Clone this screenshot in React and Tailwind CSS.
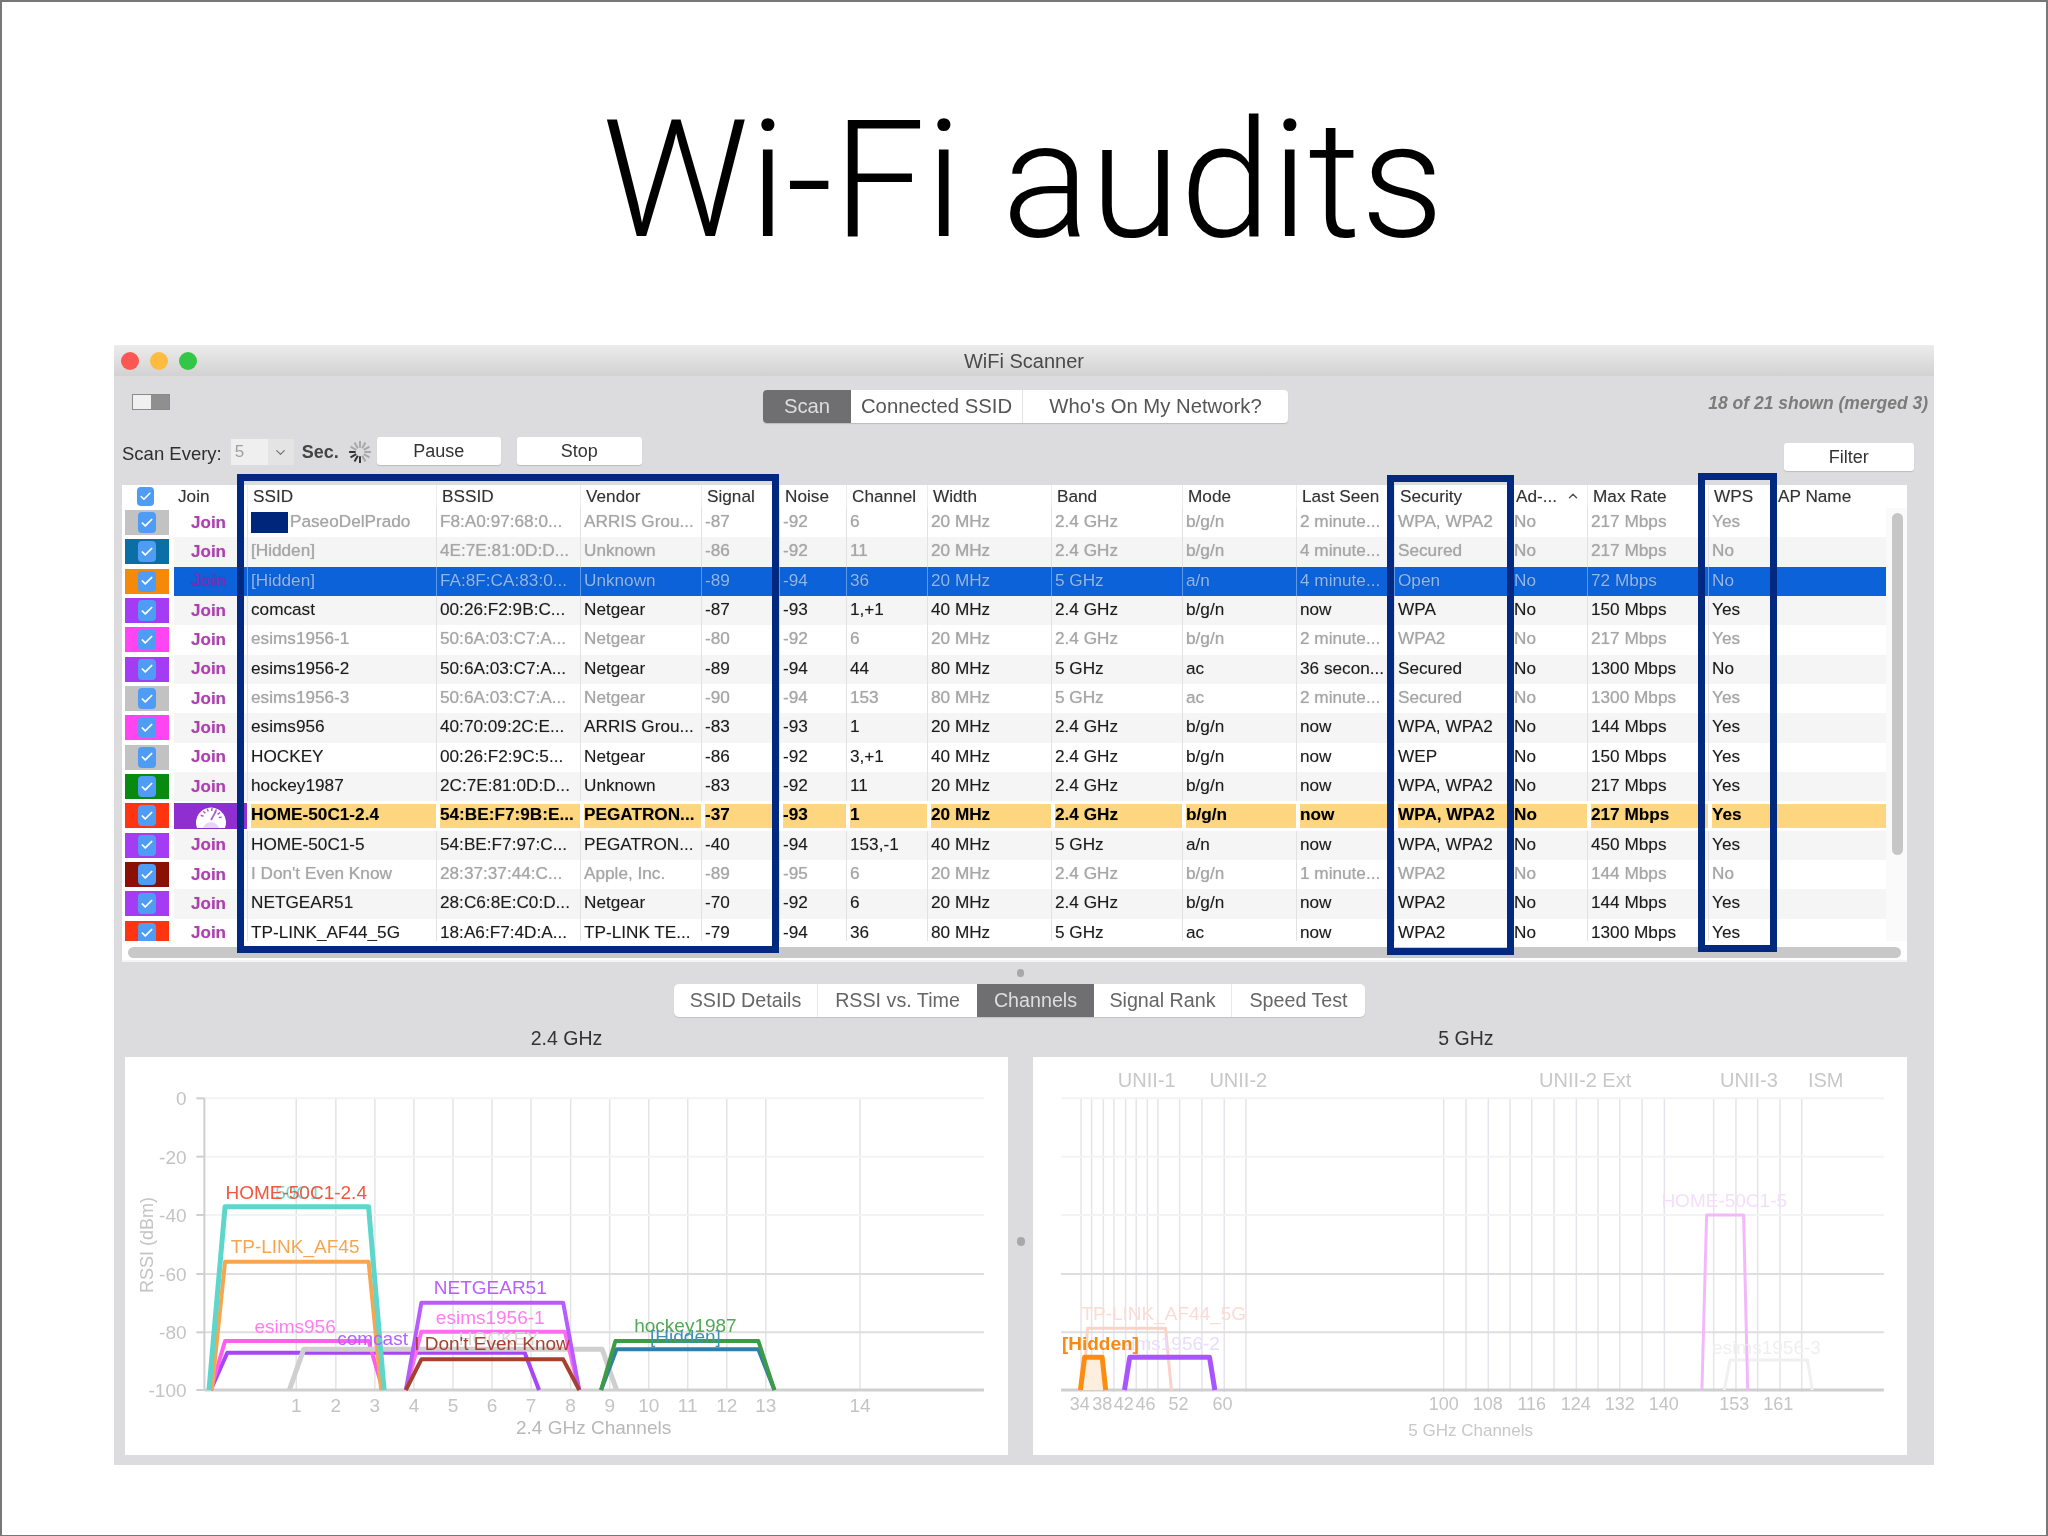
import React from "react";
import { Check, ChevronDown, ChevronUp } from "lucide-react";

const COLS = "grid grid-cols-[52px_73px_189px_144px_121px_78px_67px_81px_124px_131px_114px_98px_116px_77px_121px_64px_114px]";

const HEAD = ["SSID","BSSID","Vendor","Signal","Noise","Channel","Width","Band","Mode","Last Seen","Security","Ad-...","Max Rate","WPS","AP Name"];

const ROWS = [
  { c:"bg-[#c2c2c2]", dim:1, v:["PaseoDelPrado","F8:A0:97:68:0...","ARRIS Grou...","-87","-92","6","20 MHz","2.4 GHz","b/g/n","2 minute...","WPA, WPA2","No","217 Mbps","Yes",""] },
  { c:"bg-[#0b6fa6]", dim:1, v:["[Hidden]","4E:7E:81:0D:D...","Unknown","-86","-92","11","20 MHz","2.4 GHz","b/g/n","4 minute...","Secured","No","217 Mbps","No",""] },
  { c:"bg-[#f58a0a]", sel:1, v:["[Hidden]","FA:8F:CA:83:0...","Unknown","-89","-94","36","20 MHz","5 GHz","a/n","4 minute...","Open","No","72 Mbps","No",""] },
  { c:"bg-[#a33cf2]", v:["comcast","00:26:F2:9B:C...","Netgear","-87","-93","1,+1","40 MHz","2.4 GHz","b/g/n","now","WPA","No","150 Mbps","Yes",""] },
  { c:"bg-[#ff45f2]", dim:1, v:["esims1956-1","50:6A:03:C7:A...","Netgear","-80","-92","6","20 MHz","2.4 GHz","b/g/n","2 minute...","WPA2","No","217 Mbps","Yes",""] },
  { c:"bg-[#a33cf2]", v:["esims1956-2","50:6A:03:C7:A...","Netgear","-89","-94","44","80 MHz","5 GHz","ac","36 secon...","Secured","No","1300 Mbps","No",""] },
  { c:"bg-[#c2c2c2]", dim:1, v:["esims1956-3","50:6A:03:C7:A...","Netgear","-90","-94","153","80 MHz","5 GHz","ac","2 minute...","Secured","No","1300 Mbps","Yes",""] },
  { c:"bg-[#ff45f2]", v:["esims956","40:70:09:2C:E...","ARRIS Grou...","-83","-93","1","20 MHz","2.4 GHz","b/g/n","now","WPA, WPA2","No","144 Mbps","Yes",""] },
  { c:"bg-[#c2c2c2]", v:["HOCKEY","00:26:F2:9C:5...","Netgear","-86","-92","3,+1","40 MHz","2.4 GHz","b/g/n","now","WEP","No","150 Mbps","Yes",""] },
  { c:"bg-[#08890f]", v:["hockey1987","2C:7E:81:0D:D...","Unknown","-83","-92","11","20 MHz","2.4 GHz","b/g/n","now","WPA, WPA2","No","217 Mbps","Yes",""] },
  { c:"bg-[#ff3410]", hi:1, v:["HOME-50C1-2.4","54:BE:F7:9B:E...","PEGATRON...","-37","-93","1","20 MHz","2.4 GHz","b/g/n","now","WPA, WPA2","No","217 Mbps","Yes",""] },
  { c:"bg-[#a33cf2]", v:["HOME-50C1-5","54:BE:F7:97:C...","PEGATRON...","-40","-94","153,-1","40 MHz","5 GHz","a/n","now","WPA, WPA2","No","450 Mbps","Yes",""] },
  { c:"bg-[#8a1006]", dim:1, v:["I Don't Even Know","28:37:37:44:C...","Apple, Inc.","-89","-95","6","20 MHz","2.4 GHz","b/g/n","1 minute...","WPA2","No","144 Mbps","No",""] },
  { c:"bg-[#a33cf2]", v:["NETGEAR51","28:C6:8E:C0:D...","Netgear","-70","-92","6","20 MHz","2.4 GHz","b/g/n","now","WPA2","No","144 Mbps","Yes",""] },
  { c:"bg-[#ff3410]", v:["TP-LINK_AF44_5G","18:A6:F7:4D:A...","TP-LINK TE...","-79","-94","36","80 MHz","5 GHz","ac","now","WPA2","No","1300 Mbps","Yes",""] },
];

function Box() {
  return (
    <div className="w-[18px] h-[21px] rounded-[4px] bg-[#4f9cf5] flex items-center justify-center">
      <Check size={14} strokeWidth={3} className="text-white" />
    </div>
  );
}

function Gauge() {
  const ticks = [-70, -45, -20, 5, 30, 55, 80];
  return (
    <svg width="36" height="25" viewBox="0 0 36 25">
      <path d="M4 25 A15 15 0 1 1 32 25 Z" fill="white" />
      <path d="M10 25 A8.5 8.5 0 0 1 26 25 Z" fill="#e9d4f7" />
      {ticks.map((a) => (
        <line key={a} x1="18" y1="5" x2="18" y2="8" stroke="#a45ad8" strokeWidth="1.4" transform={`rotate(${a} 18 16)`} />
      ))}
      <line x1="18" y1="17" x2="23" y2="8" stroke="#a45ad8" strokeWidth="1.6" />
    </svg>
  );
}

function Row({ r, i }) {
  const bg = r.sel ? "bg-[#0c62d8]" : r.hi ? "bg-white" : i % 2 ? "bg-[#f5f5f5]" : "bg-white";
  const text = r.sel ? "text-[#93b8ec]" : r.hi ? "text-black font-bold" : r.dim ? "text-[#a6a6a6]" : "text-[#1c1c1c]";
  const cell = r.sel
    ? "border-l border-[#5e98e8] pl-[3px]"
    : r.hi
      ? "border-l-[4px] border-white bg-[#fdd67f] my-[2.5px]"
      : "border-l border-[#e2e2e2] pl-[3px]";
  const join = r.hi
    ? "justify-center bg-[#8f2fd0] my-[2px]"
    : r.sel
      ? "justify-end text-[#7e2fc0] pr-[21px]"
      : "justify-end text-[#b43cb4] pr-[21px]";
  return (
    <div className={`${COLS} h-[29.33px] ${bg} ${text} items-stretch`}>
      <div className="bg-white flex items-center">
        <div className={`ml-[3px] w-[44px] h-[25px] ${r.c} flex items-center justify-center`}>
          <Box />
        </div>
      </div>
      <div className={`flex items-center font-bold text-[17px] ${join}`}>
        {r.hi ? <Gauge /> : "Join"}
      </div>
      {r.v.map((t, j) => (
        <div key={j} className={`flex items-center pb-[3px] whitespace-nowrap overflow-hidden ${cell}`}>
          {i === 0 && j === 0 && <span className="w-[37px] h-[21px] mt-[2px] bg-[#00267c] mr-[2px] shrink-0" />}
          {t}
        </div>
      ))}
    </div>
  );
}

const L = (x) => 120 + x / 1.742;
const R = (x) => 1020 + x / 1.704;
const Y = (y) => 1040 + y / 3;

function Trap({ f, p, y, color, w = 4, fill = "none", y0 = 1050 }) {
  const pts = [[p[0], y0], [p[1], y], [p[2], y], [p[3], y0]].map(([a, b]) => `${f(a)},${Y(b)}`).join(" ");
  return <polyline points={pts} fill={fill} stroke={color} strokeWidth={w} strokeLinejoin="round" />;
}

function Label({ f, x, y, color, size = 19, children, weight }) {
  return (
    <text x={f(x)} y={Y(y) + size * 0.36} textAnchor="middle" fontSize={size} fill={color} fontWeight={weight}>
      {children}
    </text>
  );
}

const GRID_Y = [175, 350, 525, 702, 877, 1050];
const GRID_C = ["#f3f3f3", "#f3f3f3", "#f3f3f3", "#dedede", "#dedede", "#cfcfcf"];

function Chart24() {
  const ch = [307, 376, 444, 512, 580, 648, 716, 785, 853, 921, 989, 1057, 1125, 1289];
  return (
    <svg width="883" height="398" viewBox="125 1057 883 398" className="block">
      {ch.map((c) => <line key={c} x1={L(c)} x2={L(c)} y1={Y(175)} y2={Y(1050)} stroke="#e4e4e4" strokeWidth="1.5" />)}
      {GRID_Y.map((g, i) => <line key={g} x1={L(147)} x2={L(1505)} y1={Y(g)} y2={Y(g)} stroke={GRID_C[i]} strokeWidth={i === 5 ? 3 : 2} />)}
      <line x1={L(147)} x2={L(147)} y1={Y(175)} y2={Y(1050)} stroke="#cfcfcf" strokeWidth="2" />
      {["0","-20","-40","-60","-80","-100"].map((t, i) => (
        <g key={t}>
          <line x1={L(133)} x2={L(147)} y1={Y(GRID_Y[i])} y2={Y(GRID_Y[i])} stroke="#cfcfcf" strokeWidth="2" />
          <text x={L(116)} y={Y(GRID_Y[i]) + 7} textAnchor="end" fontSize="19" fill="#c4c4c4">{t}</text>
        </g>
      ))}
      <text transform={`translate(${L(58)} ${Y(615)}) rotate(-90)`} textAnchor="middle" fontSize="18" fill="#c4c4c4">RSSI (dBm)</text>
      {ch.map((c, i) => <text key={c} x={L(c)} y={Y(1095) + 7} textAnchor="middle" fontSize="19" fill="#c4c4c4">{i + 1}</text>)}
      <text x={L(825)} y={Y(1160) + 7} textAnchor="middle" fontSize="19" fill="#b8b8b8">2.4 GHz Channels</text>

      <Trap f={L} p={[158, 187, 705, 730]} y={938} color="#a845f5" />
      <Trap f={L} p={[158, 183, 433, 458]} y={903} color="#ff5cf0" />
      <Trap f={L} p={[295, 320, 840, 865]} y={928} color="#cfcfcf" w={5} />
      <Trap f={L} p={[498, 525, 775, 800]} y={875} color="#ff6cf2" />
      <Trap f={L} p={[498, 525, 772, 800]} y={788} color="#b85cff" />
      <Trap f={L} p={[498, 525, 772, 800]} y={958} color="#a8402f" />
      <Trap f={L} p={[160, 183, 433, 455]} y={665} color="#f6a650" />
      <Trap f={L} p={[155, 183, 433, 460]} y={500} color="#5fd6cc" w={5} />
      <Trap f={L} p={[838, 865, 1112, 1140]} y={928} color="#2f80a8" />
      <Trap f={L} p={[838, 863, 1112, 1140]} y={903} color="#3f9a45" />

      <Label f={L} x={310} y={455} color="#6fdcd2">50C1</Label>
      <Label f={L} x={307} y={455} color="#f4563c">HOME-50C1-2.4</Label>
      <Label f={L} x={305} y={618} color="#f6a650">TP-LINK_AF45</Label>
      <Label f={L} x={305} y={858} color="#ff7cf2">esims956</Label>
      <Label f={L} x={440} y={893} color="#b860ff">comcast</Label>
      <Label f={L} x={660} y={893} color="#d8d8d8">HOCKEY</Label>
      <Label f={L} x={645} y={742} color="#b860ff">NETGEAR51</Label>
      <Label f={L} x={645} y={830} color="#ff7cf2">esims1956-1</Label>
      <Label f={L} x={648} y={908} color="#a8402f">I Don't Even Know</Label>
      <Label f={L} x={985} y={855} color="#52a858">hockey1987</Label>
      <Label f={L} x={985} y={888} color="#3f8fb8">[Hidden]</Label>
    </svg>
  );
}

function Chart5() {
  const v = [104,122,142,160,180,198,217,235,272,310,348,385,722,760,798,835,872,910,948,985,1022,1060,1098,1182,1220,1257,1295,1332];
  const ticks = [[102,"34"],[140,"38"],[177,"42"],[214,"46"],[270,"52"],[345,"60"],[722,"100"],[797,"108"],[872,"116"],[947,"124"],[1022,"132"],[1097,"140"],[1217,"153"],[1292,"161"]];
  const bands = [[216,"UNII-1"],[372,"UNII-2"],[963,"UNII-2 Ext"],[1242,"UNII-3"],[1373,"ISM"]];
  return (
    <svg width="874" height="398" viewBox="1033 1057 874 398" className="block">
      {v.map((c) => <line key={c} x1={R(c)} x2={R(c)} y1={Y(175)} y2={Y(1056)} stroke="#e6e4ea" strokeWidth="1.5" />)}
      {GRID_Y.map((g, i) => <line key={g} x1={R(70)} x2={R(1472)} y1={Y(g)} y2={Y(g)} stroke={GRID_C[i]} strokeWidth={i === 5 ? 3 : 2} />)}
      {bands.map(([x, t]) => <text key={t} x={R(x)} y={Y(120) + 7} textAnchor="middle" fontSize="20" fill="#c8c8c8">{t}</text>)}
      {ticks.map(([x, t]) => <text key={t} x={R(x)} y={Y(1090) + 7} textAnchor="middle" fontSize="18" fill="#c4c4c4">{t}</text>)}
      <text x={R(768)} y={Y(1170) + 6} textAnchor="middle" fontSize="17" fill="#c8c8c8">5 GHz Channels</text>

      <Trap f={R} p={[108, 115, 248, 258]} y={865} color="#f9d3c8" w={3} />
      <Trap f={R} p={[1200, 1210, 1342, 1350]} y={960} color="#f0f0f0" w={3} />
      <Trap f={R} p={[1162, 1170, 1233, 1240]} y={525} color="#f2b8fa" w={3} />
      <Trap f={R} p={[178, 187, 323, 332]} y={952} color="#a855ff" w={5} />
      <Trap f={R} p={[103, 110, 140, 146]} y={952} color="#ff8c10" w={5} fill="#fdeedd" />

      <Label f={R} x={245} y={820} color="#fbdcd4">TP-LINK_AF44_5G</Label>
      <Label f={R} x={248} y={910} color="#e9dcfb">esims1956-2</Label>
      <Label f={R} x={1200} y={480} color="#f4dffa">HOME-50C1-5</Label>
      <Label f={R} x={1272} y={920} color="#efefef">esims1956-3</Label>
      <Label f={R} x={137} y={910} color="#f58a14" weight="700">[Hidden]</Label>
    </svg>
  );
}

function Spinner() {
  const a = [0,30,60,90,120,150,180,210,240,270,300,330];
  return (
    <svg width="24" height="24" viewBox="0 0 22 22">
      {a.map((d, i) => (
        <line key={d} x1="11" y1="1" x2="11" y2="7" stroke={i > 5 && i < 10 ? "#333" : "#a8a8a8"} strokeWidth="1.8" transform={`rotate(${d} 11 11)`} />
      ))}
    </svg>
  );
}

const BTN = "bg-white rounded-[3px] shadow-[0_1px_1px_rgba(0,0,0,0.15)] flex items-center justify-center text-[#333]";

export default function App() {
  return (
    <div className="w-[2048px] h-[1536px] bg-white border-t-2 border-l-2 border-r-2 border-b border-[#777] font-['Liberation_Sans',sans-serif] overflow-hidden">
      <h1 className="h-[343px] pt-[88px] text-center font-['Roboto',sans-serif] font-light text-[164px] leading-[180px] text-black pr-[2px]">
        Wi-Fi audits
      </h1>

      <div className="relative ml-[112px] w-[1820px] h-[1120px] bg-[#dcdcde] flex flex-col blur-[0.6px]">
        <div className="h-[31px] grid grid-cols-3 items-center bg-linear-to-b from-[#ececec] to-[#d2d2d2]">
          <div className="flex gap-[11px] pl-[7px]">
            <span className="w-[18px] h-[18px] rounded-full bg-[#fc5753]" />
            <span className="w-[18px] h-[18px] rounded-full bg-[#fdbc40]" />
            <span className="w-[18px] h-[18px] rounded-full bg-[#33c748]" />
          </div>
          <div className="text-center text-[20px] text-[#4a4a4a]">WiFi Scanner</div>
        </div>

        <div className="flex items-start mt-[14px] h-[33px] pl-[18px]">
          <div className="mt-[4px] w-[38px] h-[16px] border border-[#8a8a8a] flex">
            <span className="w-1/2 bg-[#f0f0f0]" />
            <span className="w-1/2 bg-[#8f8f8f]" />
          </div>
          <div className="ml-[593px] flex h-[33px] text-[20.3px] text-[#555] bg-white rounded-[4px] shadow-[0_1px_1px_rgba(0,0,0,0.15)]">
            <div className="w-[88px] rounded-l-[4px] bg-[#6f6f71] text-[#dedede] flex items-center justify-center">Scan</div>
            <div className="w-[172px] flex items-center justify-center border-r border-[#e4e4e4]">Connected SSID</div>
            <div className="w-[265px] flex items-center justify-center">Who's On My Network?</div>
          </div>
          <div className="ml-auto mr-[6px] text-[17.5px] font-bold italic text-[#7c7c7c]">18 of 21 shown (merged 3)</div>
        </div>

        <div className="flex items-start mt-[14px] h-[34px] pl-[8px] text-[#2e2e2e]">
          <span className="mt-[7px] text-[18.5px] leading-[20px]">Scan Every:</span>
          <div className="ml-[9px] mt-[2px] flex h-[26px]">
            <div className="w-[37px] bg-[#efefef] text-[#a0a0a0] text-[17px] pl-[4px] leading-[26px]">5</div>
            <div className="w-[26px] bg-[#e4e4e4] flex items-center justify-center"><ChevronDown size={15} className="text-[#777]" /></div>
          </div>
          <span className="ml-[8px] mt-[5px] text-[18px] leading-[20px] font-bold text-[#444]">Sec.</span>
          <span className="ml-[9px] mt-[3px]"><Spinner /></span>
          <div className={`${BTN} ml-[5px] w-[124px] h-[28px] text-[18px]`}>Pause</div>
          <div className={`${BTN} ml-[16px] w-[125px] h-[28px] text-[18px]`}>Stop</div>
          <div className={`${BTN} ml-[1142px] mt-[6px] w-[130px] h-[28px] text-[18px]`}>Filter</div>
        </div>

        <div className="mt-[14px] ml-[8px] w-[1785px] h-[475px] bg-white flex flex-col text-[17.2px] leading-[20px] [text-shadow:0_0_1px_rgba(0,0,0,0.3)]">
          <div className="flex h-[23px] shrink-0">
            <div className={`${COLS} w-[1764px] text-[#333]`}>
              <div className="flex items-center justify-center pr-[6px]"><div className="w-[17px] h-[19px] rounded-[4px] bg-[#4f9cf5] flex items-center justify-center"><Check size={13} strokeWidth={3} className="text-white" /></div></div>
              <div className="flex items-center pl-[4px] pb-[1px]">Join</div>
              {HEAD.map((h, i) => (
                <div key={h} className={`flex items-center pl-[5px] pb-[2px] border-l border-[#ececec] ${i === 11 ? "gap-[9px]" : ""}`}>
                  {h}
                  {i === 11 && <ChevronUp size={14} strokeWidth={2.5} className="text-[#555]" />}
                </div>
              ))}
            </div>
          </div>
          <div className="flex h-[433px] overflow-hidden">
            <div className="w-[1764px] shrink-0">
              {ROWS.map((r, i) => <Row key={i} r={r} i={i} />)}
            </div>
            <div className="flex-1 bg-[#fafafa]">
              <div className="mt-[5px] ml-[6px] w-[11px] h-[342px] rounded-full bg-[#c6c6c6]" />
            </div>
          </div>
          <div className="mt-[6px] ml-[6px] mr-[6px] h-[11px] rounded-full bg-[#c8c8c8]" />
        </div>

        <div className="h-[2px] bg-[#f4f4f4] mx-[8px] w-[1785px]" />
        <div className="relative h-[22px] flex items-center justify-center">
          <span className="w-[7px] h-[8px] rounded-full bg-[#a8a8a8] mr-[8px]" />
        </div>
        <div className="h-[33px] ml-[560px] flex w-[691px] bg-white rounded-[5px] text-[19.7px] text-[#666] shadow-[0_1px_1px_rgba(0,0,0,0.12)]">
          <div className="w-[144px] flex items-center justify-center border-r border-[#e8e8e8]">SSID Details</div>
          <div className="w-[159px] flex items-center justify-center">RSSI vs. Time</div>
          <div className="w-[117px] bg-[#6f6f71] text-[#dedede] flex items-center justify-center">Channels</div>
          <div className="w-[138px] flex items-center justify-center border-r border-[#e8e8e8]">Signal Rank</div>
          <div className="w-[133px] flex items-center justify-center">Speed Test</div>
        </div>
        <div className="h-[40px] pt-[3px] flex items-center text-[19.5px] text-[#333]">
          <span className="ml-[12px] w-[881px] text-center">2.4 GHz</span>
          <span className="ml-[22px] w-[874px] text-center">5 GHz</span>
        </div>
        <div className="flex items-start ml-[11px]">
          <div className="w-[883px] h-[398px] bg-white">
            <Chart24 />
          </div>
          <div className="w-[25px] flex justify-center mt-[180px]">
            <span className="w-[8px] h-[9px] rounded-full bg-[#a8a8a8]" />
          </div>
          <div className="w-[874px] h-[398px] bg-white">
            <Chart5 />
          </div>
        </div>

        <div className="absolute left-[123px] top-[129px] w-[542px] h-[479px] border-[7px] border-[#00297f]" />
        <div className="absolute left-[1273px] top-[130px] w-[127px] h-[480px] border-[7px] border-[#00297f]" />
        <div className="absolute left-[1584px] top-[128px] w-[79px] h-[479px] border-[7px] border-[#00297f]" />
      </div>
    </div>
  );
}
